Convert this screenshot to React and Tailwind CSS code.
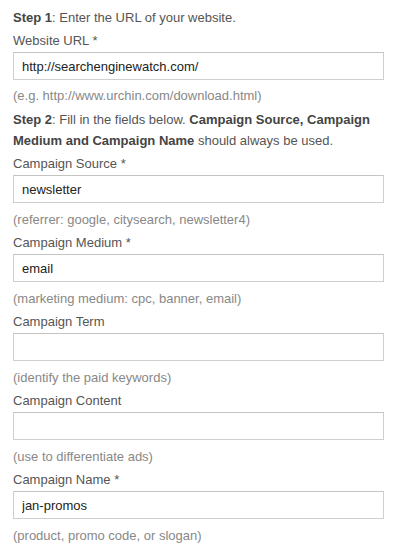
const labelCls = 'block leading-[23px] text-[#555]';
const hintCls = 'mt-[5px] leading-[23px] text-[#888]';
const inputCls =
  'block w-[371px] h-[28px] border border-[#cfcfcf] border-t-[#c4c4c4] bg-white px-2 text-[13px] text-[#222] outline-none';

const fields = [
  { label: 'Campaign Source *', value: 'newsletter', hint: '(referrer: google, citysearch, newsletter4)' },
  { label: 'Campaign Medium *', value: 'email', hint: '(marketing medium: cpc, banner, email)' },
  { label: 'Campaign Term', value: '', hint: '(identify the paid keywords)' },
  { label: 'Campaign Content', value: '', hint: '(use to differentiate ads)' },
  { label: 'Campaign Name *', value: 'jan-promos', hint: '(product, promo code, or slogan)' },
];

function Field({ label, value, hint, first }) {
  return (
    <div>
      <label className={labelCls}>{label}</label>
      <input type="text" defaultValue={value} className={inputCls} />
      <p className={first ? 'mt-1 leading-[23px] text-[#888]' : hintCls}>{hint}</p>
    </div>
  );
}

export default function App() {
  return (
    <div
      className="w-[394px] h-[549px] bg-white pl-[13px] pt-[6px] text-[13px] overflow-hidden"
      style={{ fontFamily: '"Liberation Sans", Arial, sans-serif' }}
    >
      <p className="leading-[23px] text-[#555]">
        <b className="text-[#444]">Step 1</b>: Enter the URL of your website.
      </p>
      <Field
        first
        label="Website URL *"
        value="http://searchenginewatch.com/"
        hint="(e.g. http://www.urchin.com/download.html)"
      />
      <p className="mt-[2px] leading-[21px] text-[#555] pr-2">
        <b className="text-[#444]">Step 2</b>: Fill in the fields below.{' '}
        <b className="text-[#444]">Campaign Source, Campaign Medium and Campaign Name</b> should always be used.
      </p>
      <div className="mt-[1px]">
        {fields.map((f) => (
          <Field key={f.label} {...f} />
        ))}
      </div>
    </div>
  );
}
